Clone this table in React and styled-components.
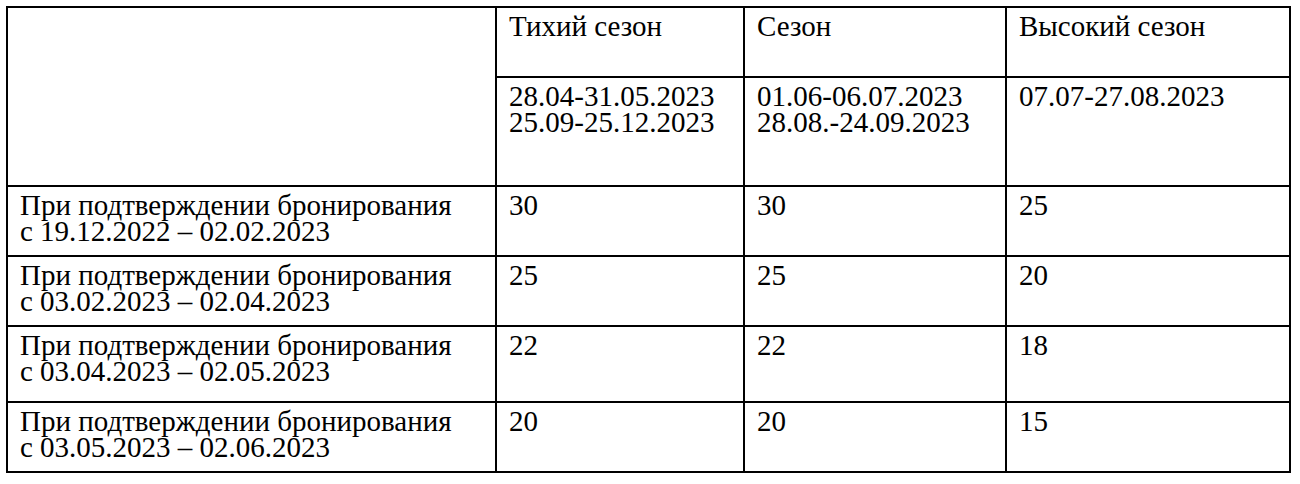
import React from "react";
import styled, { createGlobalStyle } from "styled-components";

const GlobalStyle = createGlobalStyle`
  html, body {
    margin: 0;
    padding: 0;
    background: #ffffff;
  }
  body {
    font-family: "Liberation Serif", "Times New Roman", Times, "DejaVu Serif", serif;
    color: #000000;
  }
`;

const Page = styled.div`
  padding: 6px 0 0 6px;
`;

const Table = styled.table`
  border-collapse: collapse;
  table-layout: fixed;
  width: 1285px;
  border: 2px solid #000;
  font-family: "Liberation Serif", "Times New Roman", Times, "DejaVu Serif", serif;
  font-size: 29px;
  line-height: 26px;
  color: #000;
`;

const Row = styled.tr`
  height: ${(p) => p.$h}px;
`;

const Cell = styled.td`
  border: 2px solid #000;
  vertical-align: top;
  text-align: left;
  font-family: inherit;
  font-size: inherit;
  font-weight: normal;
  padding: 5px 8px 0 12px;
  white-space: nowrap;
`;

const Line = styled.div`
  display: block;
`;

const seasons = [
  { name: "Тихий сезон", dates: ["28.04-31.05.2023", "25.09-25.12.2023"] },
  { name: "Сезон", dates: ["01.06-06.07.2023", "28.08.-24.09.2023"] },
  { name: "Высокий сезон", dates: ["07.07-27.08.2023"] },
];

const rows = [
  { period: "с 19.12.2022 – 02.02.2023", values: [30, 30, 25], h: 70 },
  { period: "с 03.02.2023 – 02.04.2023", values: [25, 25, 20], h: 70 },
  { period: "с 03.04.2023 – 02.05.2023", values: [22, 22, 18], h: 76 },
  { period: "с 03.05.2023 – 02.06.2023", values: [20, 20, 15], h: 70 },
];

export default function App() {
  return (
    <>
      <GlobalStyle />
      <Page>
        <Table>
          <colgroup>
            <col style={{ width: 489 }} />
            <col style={{ width: 248 }} />
            <col style={{ width: 262 }} />
            <col style={{ width: 284 }} />
          </colgroup>
          <tbody>
            <Row $h={70}>
              <Cell rowSpan={2} />
              {seasons.map((s) => (
                <Cell as="th" key={s.name}>
                  {s.name}
                </Cell>
              ))}
            </Row>
            <Row $h={109}>
              {seasons.map((s) => (
                <Cell key={s.name}>
                  {s.dates.map((d) => (
                    <Line key={d}>{d}</Line>
                  ))}
                </Cell>
              ))}
            </Row>
            {rows.map((r) => (
              <Row $h={r.h} key={r.period}>
                <Cell>
                  <Line>При подтверждении бронирования</Line>
                  <Line>{r.period}</Line>
                </Cell>
                {r.values.map((v, i) => (
                  <Cell key={i}>{v}</Cell>
                ))}
              </Row>
            ))}
          </tbody>
        </Table>
      </Page>
    </>
  );
}
